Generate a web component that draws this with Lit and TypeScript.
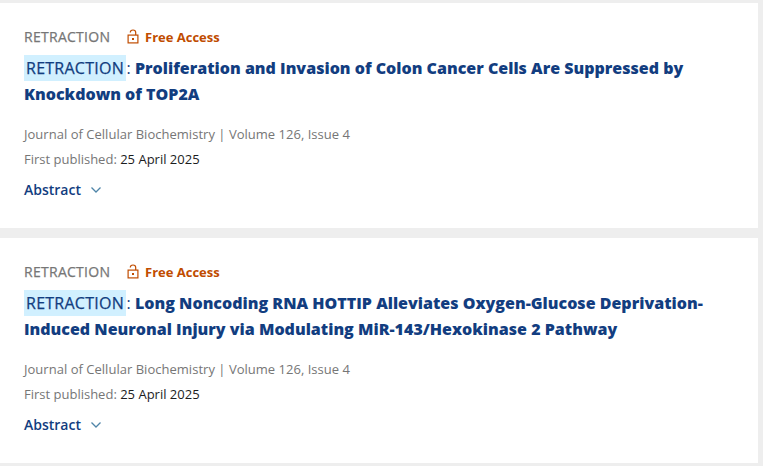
import { LitElement, html, css } from "lit";
import { customElement, property } from "lit/decorators.js";

@customElement("result-card")
class ResultCard extends LitElement {
  @property() heading = "";
  static styles = css`
    :host { display: block; box-sizing: border-box; height: 225px; background: #fff; padding: 24px 24px 0; }
    .meta { display: flex; align-items: center; height: 20px; font-size: 14px; line-height: 20px; color: #767676; }
    .type { letter-spacing: 0.28px; -webkit-text-stroke: 0.25px #767676; width: 103px; }
    .lock { display: block; width: 12px; height: 15px; margin: -1px 6px 0 0; }
    .access { font-size: 13px; font-weight: 700; color: #c04c00; }
    h2 { margin: 8px 0 0; font-size: 16px; line-height: 26px; font-weight: 800; color: #123d80; }
    .tag { font-weight: 400; }
    mark { display: inline-block; box-sizing: border-box; height: 26px; line-height: 26px; width: 102px; margin-right: 0.6px; background: #d1f0ff; color: inherit; padding: 0 2px; letter-spacing: 0.26px; -webkit-text-stroke: 0.25px #123d80; white-space: nowrap; vertical-align: top; }
    .rest { letter-spacing: 0.01px; }
    .info { margin-top: 15px; font-size: 13px; line-height: 25px; color: #767676; }
    .journal { letter-spacing: 0.022px; }
    .date { color: #1c1d1e; }
    .abstract { display: flex; align-items: center; margin-top: 7px; height: 20px; font-size: 14px; font-weight: 600; color: #123d80; }
    .chev { display: block; width: 10px; height: 6px; margin: 2px 0 0 10px; }
  `;
  render() {
    return html`
      <div class="meta"><span class="type">RETRACTION</span>
        <svg class="lock" viewBox="0 0 12 15" fill="none" stroke="#c04c00" stroke-width="1.2"><rect x="1.1" y="6.1" width="9.8" height="7.8"/><path d="M3.3 3.6V3.4a2.7 2.4 0 0 1 5.4 0V6"/><rect x="5" y="9" width="2" height="2" fill="#c04c00" stroke="none"/></svg>
        <span class="access">Free Access</span></div>
      <h2><span class="tag"><mark>RETRACTION</mark>: </span><span class="rest">${this.heading}</span></h2>
      <div class="info"><div class="journal">Journal of Cellular Biochemistry | Volume 126, Issue 4</div>
      <div>First published: <span class="date">25 April 2025</span></div></div>
      <div class="abstract">Abstract<svg class="chev" viewBox="0 0 10 6" fill="none" stroke="#4f85a8" stroke-width="1.3"><path d="M.5.5 5 5 9.5.5"/></svg></div>`;
  }
}

@customElement("app-root")
class AppRoot extends LitElement {
  static styles = css`
    :host { display: flex; flex-direction: column; gap: 10px; box-sizing: border-box; height: 466px; padding: 3px 5px 0 0; background: #eee; font-family: "Open Sans", sans-serif; overflow: hidden; }
  `;
  render() {
    return html`
      <result-card heading="Proliferation and Invasion of Colon Cancer Cells Are Suppressed by Knockdown of TOP2A"></result-card>
      <result-card heading="Long Noncoding RNA HOTTIP Alleviates Oxygen-Glucose Deprivation-Induced Neuronal Injury via Modulating MiR-143/Hexokinase 2 Pathway"></result-card>`;
  }
}
